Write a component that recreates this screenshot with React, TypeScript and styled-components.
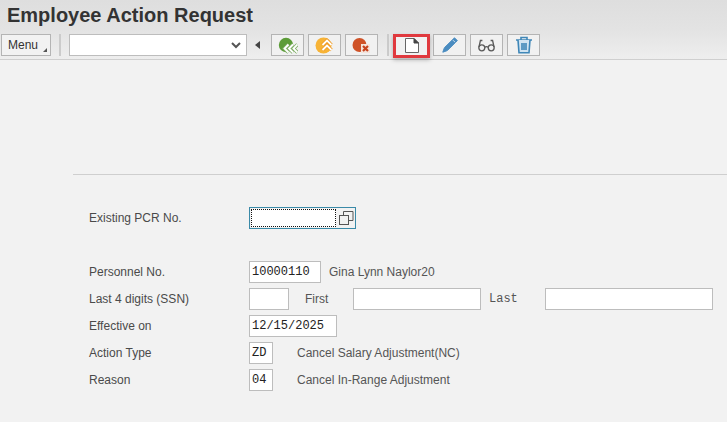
import React from "react";
import styled, { createGlobalStyle } from "styled-components";

const Global = createGlobalStyle`
  html, body { margin: 0; padding: 0; background: #f2f2f2; overflow: hidden; }
  * { box-sizing: border-box; }
`;
const Page = styled.div`
  width: 727px; height: 422px; background: #f2f2f2;
  font-family: "Liberation Sans", Arial, sans-serif; color: #4a4a4a;
  display: flex; flex-direction: column;
`;
const Header = styled.header`
  height: 60px; flex: none; border-bottom: 1px solid #cfcfcf;
  background: linear-gradient(#dedede, #e3e3e3 50%, #eeeeee);
`;
const Title = styled.h1`
  margin: 0; height: 32px; padding: 3px 0 0 7px; font-size: 20px; line-height: 24px;
  font-weight: 700; color: #333;
`;
const Toolbar = styled.div`
  display: flex; align-items: center; height: 22px; padding-left: 1px; margin-top: 2px;
`;
const MenuButton = styled.div`
  position: relative; width: 50px; height: 22px; border: 1px solid #b4b4b4; background: #f2f2f2;
  font-size: 12px; line-height: 20px; padding-left: 6px; color: #333;
  &::after {
    content: ""; position: absolute; right: 3px; bottom: 3px;
    border-left: 4px solid transparent; border-bottom: 4px solid #555;
  }
`;
const Sep = styled.div<{ $ml: number; $mr: number }>`
  width: 2px; height: 22px; background: #cbcbcb; flex: none;
  margin-left: ${p => p.$ml}px; margin-right: ${p => p.$mr}px;
`;
const Combo = styled.div`
  width: 178px; height: 22px; background: #fff; border: 1px solid #bdbdbd; flex: none;
  display: flex; align-items: center; justify-content: flex-end; padding-right: 5px;
`;
const Collapse = styled.div`
  width: 0; height: 0; margin: 0 11px 0 8px; flex: none;
  border-top: 4px solid transparent; border-bottom: 4px solid transparent; border-right: 5px solid #444;
`;
const ToolButton = styled.div<{ $ml?: number }>`
  width: 33px; height: 22px; border: 1px solid #b4b4b4; background: #f1f1f1;
  display: flex; align-items: center; justify-content: center; flex: none;
  margin-left: ${p => p.$ml ?? 4}px;
`;
const HiBox = styled.div`
  position: relative; width: 33px; height: 22px; flex: none; margin-left: 2px;
  display: flex; align-items: center; justify-content: center;
  background: #f1f1f1;
  &::after {
    content: ""; position: absolute; inset: 0 -2px -2px -2px; border: 3px solid #e0393e;
    box-shadow: 0 2px 4px rgba(0,0,0,.25);
  }
`;
const Main = styled.main`
  flex: 1; display: flex; flex-direction: column; padding: 114px 0 0 73px;
`;
const Divider = styled.div`
  height: 1px; background: #cfcfcf;
`;
const Form = styled.div`
  padding: 32px 0 0 16px; display: flex; flex-direction: column;
`;
const Row = styled.div<{ $mt?: number }>`
  display: flex; align-items: center; height: 22px; margin-top: ${p => p.$mt ?? 5}px;
`;
const Label = styled.div`
  width: 160px; flex: none; font-size: 12px; color: #4a4a4a;
`;
const Field = styled.div<{ $w: number }>`
  width: ${p => p.$w}px; height: 22px; flex: none; background: #fff; border: 1px solid #bdbdbd;
  font-family: "Liberation Mono", "DejaVu Sans Mono", monospace; font-size: 12px; line-height: 20px;
  padding-left: 2px; color: #222;
`;
const FocusField = styled.div`
  width: 107px; height: 22px; flex: none; background: #f2f2f2; border: 1px solid #3a8aa8;
  display: flex; align-items: center;
`;
const FocusInner = styled.div`
  width: 85px; height: 18px; margin: 0 3px 0 1px; background: #fff; border: 1px dotted #111;
`;
const Text = styled.div<{ $ml: number; $w?: number }>`
  font-size: 12px; color: #555; margin-left: ${p => p.$ml}px; flex: none;
  ${p => p.$w ? `width: ${p.$w}px;` : ""}
`;
const MonoText = styled(Text)`
  font-family: "Liberation Mono", "DejaVu Sans Mono", monospace; font-size: 12px;
`;

const Chevron = () => (
  <svg width="10" height="7" viewBox="0 0 10 7"><path d="M1 1l4 4 4-4" fill="none" stroke="#555" strokeWidth="2" /></svg>
);
const Back = () => (
  <svg width="20" height="17" viewBox="0 0 20 17">
    <circle cx="8" cy="8" r="7.2" fill="#5c9c38" />
    <path d="M10.5 7.5l-4 4 4 4M15 7.5l-4 4 4 4M19.5 7.5l-4 4 4 4" fill="none" stroke="#7fae66" strokeWidth="3.4" />
    <path d="M10.5 7.5l-4 4 4 4M15 7.5l-4 4 4 4M19.5 7.5l-4 4 4 4" fill="none" stroke="#fff" strokeWidth="1.8" />
  </svg>
);
const Up = () => (
  <svg width="20" height="17" viewBox="0 0 20 17">
    <circle cx="8.5" cy="8.5" r="8" fill="#f7b336" />
    <path d="M7.5 8l4.5-4.5L16.5 8M7.5 13l4.5-4.5 4.5 4.5" fill="none" stroke="#ef9a24" strokeWidth="3.4" />
    <path d="M7.5 8l4.5-4.5L16.5 8M7.5 13l4.5-4.5 4.5 4.5" fill="none" stroke="#fff" strokeWidth="1.8" />
  </svg>
);
const Cancel = () => (
  <svg width="20" height="17" viewBox="0 0 20 17">
    <circle cx="7.5" cy="8" r="7" fill="#cf5227" />
    <path d="M9 7h9v9H9z" fill="#f4e4dc" />
    <path d="M11 9l5 5M16 9l-5 5" stroke="#c8421c" strokeWidth="2.2" />
  </svg>
);
const Doc = () => (
  <svg width="14" height="15" viewBox="0 0 14 15">
    <path d="M.5.5h8.5l4.5 4.5v9.5H.5z" fill="#fff" stroke="#666" />
    <path d="M9 .5l4.5 4.5H9z" fill="#444" stroke="#444" />
  </svg>
);
const Pencil = () => (
  <svg width="16" height="16" viewBox="0 0 16 16">
    <path d="M12.5.8l2.8 2.8L5.3 13.6.8 15.2l1.6-4.5z" fill="#4a8cc0" stroke="#4a8cc0" strokeLinejoin="round" />
    <path d="M11 3.2l2 2" stroke="#cfe2f1" />
  </svg>
);
const Glasses = () => (
  <svg width="17" height="13" viewBox="0 0 17 13" fill="none" stroke="#5a5a5a" strokeWidth="1.3">
    <circle cx="3.8" cy="8.8" r="3" />
    <circle cx="13.2" cy="8.8" r="3" />
    <path d="M6.8 8.3c1-.7 2.4-.7 3.4 0M1 8l1.4-6.5h2M16 8l-1.4-6.5h-2" />
  </svg>
);
const Trash = () => (
  <svg width="18" height="18" viewBox="0 0 18 18" fill="none" stroke="#3f87b8" strokeWidth="1.6">
    <path d="M1 4h16M6 4V1.5h6V4" />
    <path d="M3 4l1 12.8h10L15 4" fill="#cfe3f1" />
    <path d="M7 7v7M9 7v7M11 7v7" />
  </svg>
);
const Copy = () => (
  <svg width="15" height="14" viewBox="0 0 15 14" fill="none" stroke="#555">
    <rect x="0.5" y="4.5" width="9" height="9" />
    <path d="M4.5 4.5V.5h9.5v9h-4.5" />
  </svg>
);

export default function App() {
  return (
    <Page>
      <Global />
      <Header>
        <Title>Employee Action Request</Title>
        <Toolbar>
          <MenuButton>Menu</MenuButton>
          <Sep $ml={8} $mr={8} />
          <Combo><Chevron /></Combo>
          <Collapse />
          <ToolButton $ml={0}><Back /></ToolButton>
          <ToolButton $ml={4}><Up /></ToolButton>
          <ToolButton $ml={4}><Cancel /></ToolButton>
          <Sep $ml={9} $mr={4} />
          <HiBox><Doc /></HiBox>
          <ToolButton $ml={5}><Pencil /></ToolButton>
          <ToolButton $ml={4}><Glasses /></ToolButton>
          <ToolButton $ml={4}><Trash /></ToolButton>
        </Toolbar>
      </Header>
      <Main>
        <Divider />
        <Form>
          <Row $mt={0}>
            <Label>Existing PCR No.</Label>
            <FocusField><FocusInner /><Copy /></FocusField>
          </Row>
          <Row $mt={32}>
            <Label>Personnel No.</Label>
            <Field $w={72}>10000110</Field>
            <Text $ml={8}>Gina Lynn Naylor20</Text>
          </Row>
          <Row>
            <Label>Last 4 digits (SSN)</Label>
            <Field $w={40} />
            <Text $ml={16} $w={48}>First</Text>
            <Field $w={128} />
            <MonoText $ml={8} $w={56}>Last</MonoText>
            <Field $w={168} />
          </Row>
          <Row>
            <Label>Effective on</Label>
            <Field $w={88}>12/15/2025</Field>
          </Row>
          <Row>
            <Label>Action Type</Label>
            <Field $w={24}>ZD</Field>
            <Text $ml={24}>Cancel Salary Adjustment(NC)</Text>
          </Row>
          <Row>
            <Label>Reason</Label>
            <Field $w={24}>04</Field>
            <Text $ml={24}>Cancel In-Range Adjustment</Text>
          </Row>
        </Form>
      </Main>
    </Page>
  );
}
